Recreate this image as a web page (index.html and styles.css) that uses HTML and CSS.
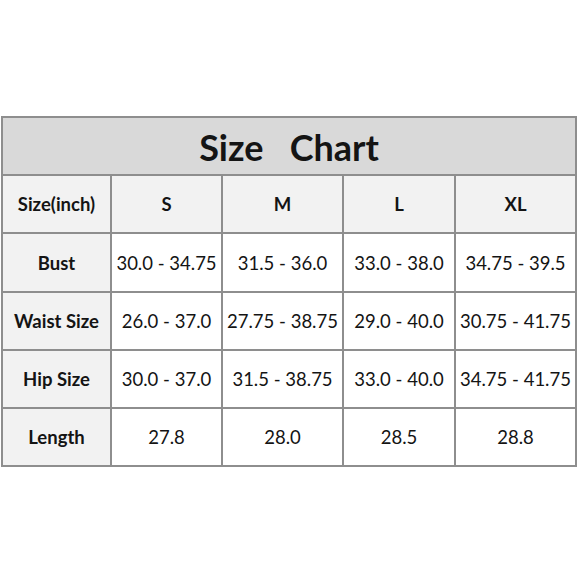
FILE: index.html
```html
<!DOCTYPE html>
<html>
<head>
<meta charset="utf-8">
<link rel="stylesheet" href="styles.css">
</head>
<body>
<div class="chart">
  <div class="cell title">Size   Chart</div>
  <div class="cell head">Size(inch)</div>
  <div class="cell head">S</div>
  <div class="cell head">M</div>
  <div class="cell head">L</div>
  <div class="cell head">XL</div>

  <div class="cell label">Bust</div>
  <div class="cell">30.0 - 34.75</div>
  <div class="cell">31.5 - 36.0</div>
  <div class="cell">33.0 - 38.0</div>
  <div class="cell">34.75 - 39.5</div>

  <div class="cell label">Waist Size</div>
  <div class="cell">26.0 - 37.0</div>
  <div class="cell">27.75 - 38.75</div>
  <div class="cell">29.0 - 40.0</div>
  <div class="cell">30.75 - 41.75</div>

  <div class="cell label">Hip Size</div>
  <div class="cell">30.0 - 37.0</div>
  <div class="cell">31.5 - 38.75</div>
  <div class="cell">33.0 - 40.0</div>
  <div class="cell">34.75 - 41.75</div>

  <div class="cell label">Length</div>
  <div class="cell">27.8</div>
  <div class="cell">28.0</div>
  <div class="cell">28.5</div>
  <div class="cell">28.8</div>
</div>
</body>
</html>
```

FILE: styles.css
```css
html, body {
  margin: 0;
  padding: 0;
  background: #ffffff;
}

body {
  font-family: Lato, "Open Sans", sans-serif;
  color: #141414;
  padding-top: 116px;
  padding-left: 1px;
}

.chart {
  display: grid;
  width: 572px;
  grid-template-columns: 107px 109px 119px 110px 119px;
  grid-template-rows: 56px 56px 57px 56px 56px 56px;
  gap: 2px;
  padding: 2px;
  background: #8e8e8e;
}

.cell {
  display: flex;
  align-items: center;
  justify-content: center;
  background: #ffffff;
  font-size: 18.5px;
  white-space: nowrap;
}

.title {
  grid-column: 1 / span 5;
  background: #d9d9d9;
  font-size: 36px;
  font-weight: 700;
  white-space: pre;
  padding-top: 2px;
}

.head {
  background: #f2f2f2;
  font-weight: 700;
}

.label {
  background: #f2f2f2;
  font-weight: 700;
}
```
